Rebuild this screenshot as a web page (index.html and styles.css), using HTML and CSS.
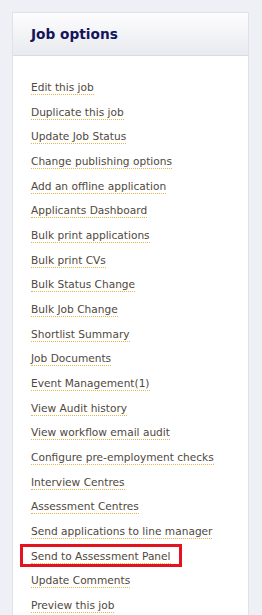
FILE: index.html
```html
<!DOCTYPE html>
<html lang="en">
<head>
  <meta charset="UTF-8" />
  <meta name="viewport" content="width=device-width, initial-scale=1" />
  <title>Job options</title>
  <link rel="stylesheet" href="styles.css">
</head>
<body>
  <div class="panel">
    <div class="panel-header">
      <h2>Job options</h2>
    </div>

    <ul class="options">
      <li><a href="#">Edit this job</a></li>
      <li><a href="#">Duplicate this job</a></li>
      <li><a href="#">Update Job Status</a></li>
      <li><a href="#">Change publishing options</a></li>
      <li><a href="#">Add an offline application</a></li>
      <li><a href="#">Applicants Dashboard</a></li>
      <li><a href="#">Bulk print applications</a></li>
      <li><a href="#">Bulk print CVs</a></li>
      <li><a href="#">Bulk Status Change</a></li>
      <li><a href="#">Bulk Job Change</a></li>
      <li><a href="#">Shortlist Summary</a></li>
      <li><a href="#">Job Documents</a></li>
      <li><a href="#">Event Management(1)</a></li>
      <li><a href="#">View Audit history</a></li>
      <li><a href="#">View workflow email audit</a></li>
      <li><a href="#">Configure pre-employment checks</a></li>
      <li><a href="#">Interview Centres</a></li>
      <li><a href="#">Assessment Centres</a></li>
      <li><a href="#">Send applications to line manager</a></li>
      <li class="highlight"><a href="#">Send to Assessment Panel</a></li>
      <li><a href="#">Update Comments</a></li>
      <li><a href="#">Preview this job</a></li>
    </ul>
  </div>
</body>
</html>
```

FILE: styles.css
```css
:root {
  --page-bg: #eef0f5;
  --panel-border: #dce3ec;
  --title-color: #14145a;
  --link-color: #4f483e;
  --link-underline: #e6b54a;
  --mark-color: #e3141f;
}

body {
  font-family: 'DejaVu Sans', Verdana, sans-serif;
  background-color: var(--page-bg);
  margin: 0;
  padding: 12px 13px 0 12px;
  overflow: hidden;
}

.panel {
  background-color: white;
  border: 1px solid var(--panel-border);
  border-bottom: none;
}

.panel-header {
  height: 42px;
  background: linear-gradient(to bottom, #fdfdfe, #e8eaef);
  border-bottom: 1px solid #d5dce6;
  display: flex;
  align-items: center;
  padding: 0 18px;
}

h2 {
  margin: 0;
  font-size: 13.7px;
  font-weight: bold;
  color: var(--title-color);
}

.options {
  list-style: none;
  margin: 0;
  padding: 19px 0 0 18px;
}

.options li {
  line-height: 24.67px;
  font-size: 10.6px;
}

.options a {
  color: var(--link-color);
  text-decoration: none;
  border-bottom: 1px dotted var(--link-underline);
  padding-bottom: 1px;
}

.highlight {
  position: relative;
}

.highlight::before {
  content: "";
  position: absolute;
  left: -11px;
  top: 0;
  width: 162px;
  height: 23px;
  border: 3px solid var(--mark-color);
  box-sizing: border-box;
}
```
